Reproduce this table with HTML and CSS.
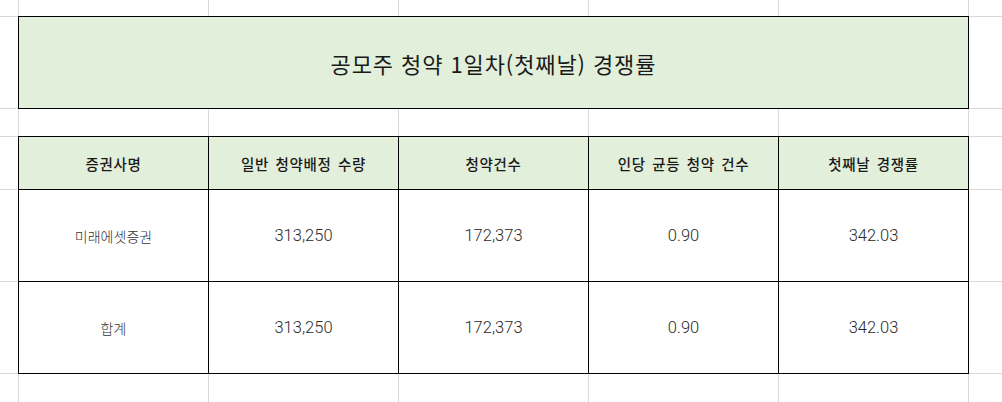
FILE: index.html
```html
<!DOCTYPE html>
<html lang="ko">
<head>
<meta charset="utf-8">
<title>공모주 청약 1일차 경쟁률</title>
<link rel="stylesheet" href="styles.css">
</head>
<body>
<div class="sheet">
  <!-- row 1 -->
  <div class="c"></div><div class="c"></div><div class="c"></div><div class="c"></div><div class="c"></div><div class="c"></div><div class="c"></div>
  <!-- row 2: title -->
  <div class="c"></div>
  <div class="c title">공모주 청약 1일차(첫째날) 경쟁률</div>
  <div class="c"></div>
  <!-- row 3 -->
  <div class="c"></div><div class="c"></div><div class="c"></div><div class="c"></div><div class="c"></div><div class="c"></div><div class="c"></div>
  <!-- row 4: header -->
  <div class="c"></div>
  <div class="c th">증권사명</div>
  <div class="c th">일반 청약배정 수량</div>
  <div class="c th">청약건수</div>
  <div class="c th">인당 균등 청약 건수</div>
  <div class="c th">첫째날 경쟁률</div>
  <div class="c"></div>
  <!-- row 5 -->
  <div class="c"></div>
  <div class="c td">미래에셋증권</div>
  <div class="c td num">313,250</div>
  <div class="c td num">172,373</div>
  <div class="c td num">0.90</div>
  <div class="c td num">342.03</div>
  <div class="c"></div>
  <!-- row 6 -->
  <div class="c"></div>
  <div class="c td">합계</div>
  <div class="c td num">313,250</div>
  <div class="c td num">172,373</div>
  <div class="c td num">0.90</div>
  <div class="c td num">342.03</div>
  <div class="c"></div>
  <!-- row 7 -->
  <div class="c"></div><div class="c"></div><div class="c"></div><div class="c"></div><div class="c"></div><div class="c"></div><div class="c"></div>
</div>
</body>
</html>
```

FILE: styles.css
```css
html, body {
  margin: 0;
  padding: 0;
  background: #ffffff;
}

.sheet {
  width: 1002px;
  height: 402px;
  overflow: hidden;
  display: grid;
  grid-template-columns: 18px repeat(5, 189px) 1fr;
  grid-template-rows: 16px 91px 27px 52px 91px 91px 1fr;
  gap: 1px;
  background: #d9d9d9;
  font-family: "Noto Sans CJK KR", "Noto Sans", sans-serif;
}

.c {
  background: #ffffff;
  display: flex;
  align-items: center;
  justify-content: center;
  white-space: nowrap;
}

.title {
  grid-column: 2 / 7;
  background: #e2efda;
  outline: 1px solid #000000;
  font-size: 22px;
  letter-spacing: 0.9px;
  font-weight: 400;
  color: #1a1a1a;
}

.th {
  background: #e2efda;
  outline: 1px solid #000000;
  font-size: 14.5px;
  letter-spacing: 0.6px;
  word-spacing: 2px;
  font-weight: 500;
  color: #1a1a1a;
}

.td {
  outline: 1px solid #000000;
  font-size: 14px;
  font-weight: 300;
  color: #333333;
}

.num {
  font-family: Roboto, "Liberation Sans", Arial, sans-serif;
  font-size: 16.5px;
  font-weight: 300;
  color: #2a2a2a;
}
```
